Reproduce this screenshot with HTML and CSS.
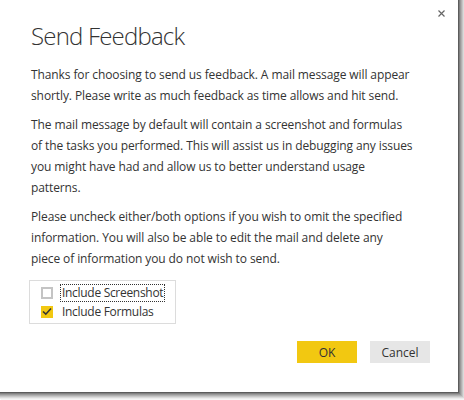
FILE: index.html
```html
<!DOCTYPE html>
<html>
<head>
<meta charset="utf-8">
<link rel="stylesheet" href="styles.css">
</head>
<body>
<div class="dialog">
  <button class="close" aria-label="Close">
    <svg width="7" height="7" viewBox="0 0 7 7"><path d="M0.5 0.5L6.5 6.5M6.5 0.5L0.5 6.5" stroke="#666" stroke-width="1.2" fill="none"/></svg>
  </button>
  <h1 class="title">Send Feedback</h1>
  <p class="para">Thanks for choosing to send us feedback. A mail message will appear<br>shortly. Please write as much feedback as time allows and hit send.</p>
  <p class="para">The mail message by default will contain a screenshot and formulas<br>of the tasks you performed. This will assist us in debugging any issues<br>you might have had and allow us to better understand usage<br>patterns.</p>
  <p class="para">Please uncheck either/both options if you wish to omit the specified<br>information. You will also be able to edit the mail and delete any<br>piece of information you do not wish to send.</p>
  <div class="options">
    <label class="option">
      <span class="box"></span>
      <span class="label focus">Include Screenshot</span>
    </label>
    <label class="option">
      <span class="box checked">
        <svg width="10" height="9" viewBox="0 0 10 9"><path d="M1 4.5L3.8 7.2L9 1.5" stroke="#333" stroke-width="1.6" fill="none"/></svg>
      </span>
      <span class="label">Include Formulas</span>
    </label>
  </div>
  <div class="actions">
    <button class="btn primary">OK</button>
    <button class="btn secondary">Cancel</button>
  </div>
</div>
</body>
</html>
```
FILE: styles.css
```css
html, body {
  margin: 0;
  padding: 0;
  background: #ffffff;
  overflow: hidden;
}
body {
  width: 464px;
  height: 400px;
  font-family: "Open Sans", "Noto Sans", sans-serif;
  color: #333333;
}
.dialog {
  position: relative;
  box-sizing: border-box;
  margin: -6px 0 0 -6px;
  width: 465px;
  height: 399px;
  background: #ffffff;
  border-right: 1px solid #5c5c5c;
  border-bottom: 1px solid #5c5c5c;
  box-shadow: 1px 1px 0 #808080, 2px 2px 0 #9a9a9a, 3px 3px 0 #b0b0b0, 4px 4px 0 #c6c6c6, 5px 5px 0 #dadada, 6px 6px 0 #ececec, 7px 7px 0 #f6f6f6;
  padding: 26px 0 0 37px;
}
.close {
  position: absolute;
  top: 13px;
  right: 10px;
  width: 13px;
  height: 13px;
  padding: 0;
  border: 0;
  background: transparent;
  display: flex;
  align-items: center;
  justify-content: center;
}
.title {
  margin: 0 0 12px 0;
  font-size: 24px;
  line-height: 32px;
  font-weight: 300;
  letter-spacing: -0.8px;
  color: #333333;
}
.para {
  margin: 0 0 8px 0;
  width: 425px;
  white-space: nowrap;
  font-size: 12px;
  line-height: 21px;
  letter-spacing: -0.1px;
}
.options {
  display: inline-flex;
  flex-direction: column;
  margin: 3px 0 0 -2px;
  padding: 2px 10px 2px 11px;
  border: 1px solid #dcdcdc;
}
.option {
  display: flex;
  align-items: center;
  gap: 7px;
  height: 19px;
  font-size: 12px;
  letter-spacing: -0.3px;
}
.box {
  box-sizing: border-box;
  width: 12px;
  height: 12px;
  border: 2px solid #c4c4c4;
  display: flex;
  align-items: center;
  justify-content: center;
}
.box.checked {
  border: 0;
  background: #f2c811;
}
.label {
  line-height: 16px;
  padding: 0 1px;
  border: 1px solid transparent;
}
.label.focus {
  border: 1px dotted #333333;
}
.actions {
  display: flex;
  justify-content: flex-end;
  gap: 13px;
  margin: 17px 0 0 0;
  padding-right: 28px;
}
.btn {
  width: 60px;
  height: 22px;
  border: 0;
  padding: 0;
  font-family: "Open Sans", "Noto Sans", sans-serif;
  font-size: 12px;
  color: #333333;
}
.primary {
  background: #f2c811;
}
.secondary {
  background: #e6e6e6;
}
```
